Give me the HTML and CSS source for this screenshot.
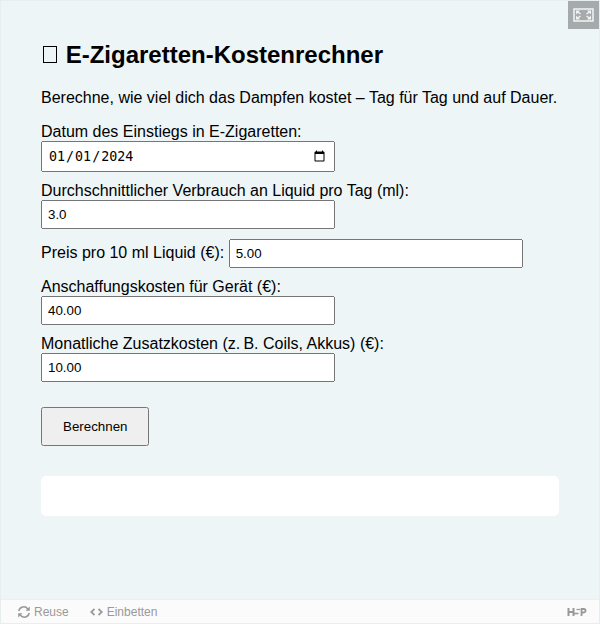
FILE: index.html
```html
<!DOCTYPE html>
<html lang="de">

<head>
    <meta charset="UTF-8">
    <meta name="viewport" content="width=device-width, initial-scale=1.0">
    <title>E-Zigaretten-Kostenrechner</title>
    <link rel="stylesheet" href="styles.css">
</head>

<body>
    <div class="frame">
        <button type="button" class="fullscreen" aria-label="Vollbild">
            <svg width="21" height="14" viewBox="0 0 21 14">
                <rect x="1" y="1" width="19" height="12" fill="none" stroke="#f4f4f4" stroke-width="1.5" />
                <path d="M3 2.500h4L3 6.500zM18 2.500h-4l4 4zM3 11.500h4l-4-4zM18 11.500h-4l4-4z" fill="#f4f4f4" />
                <path d="M4 3.500l3.500 2.500M17 3.500L13.500 6M4 10.500L7.500 8M17 10.500L13.500 8" stroke="#f4f4f4" stroke-width="1.500" />
            </svg>
        </button>

        <main class="calculator">
            <h1><span class="title-icon"></span> E-Zigaretten-Kostenrechner</h1>
            <p class="intro">Berechne, wie viel dich das Dampfen kostet – Tag für Tag und auf Dauer.</p>

            <form id="cost-form">
                <div class="field">
                    <label for="start-date">Datum des Einstiegs in E-Zigaretten:</label>
                    <input type="date" id="start-date" value="2024-01-01">
                </div>
                <div class="field">
                    <label for="liquid">Durchschnittlicher Verbrauch an Liquid pro Tag (ml):</label>
                    <input type="text" inputmode="decimal" id="liquid" value="3.0">
                </div>
                <div class="field">
                    <label for="price">Preis pro 10 ml Liquid (€):</label>
                    <input type="text" inputmode="decimal" id="price" value="5.00">
                </div>
                <div class="field">
                    <label for="device">Anschaffungskosten für Gerät (€):</label>
                    <input type="text" inputmode="decimal" id="device" value="40.00">
                </div>
                <div class="field">
                    <label for="extra">Monatliche Zusatzkosten (z.&#8239;B. Coils, Akkus) (€):</label>
                    <input type="text" inputmode="decimal" id="extra" value="10.00">
                </div>
                <button type="button" class="submit">Berechnen</button>
            </form>

            <div class="result" id="result"></div>
        </main>

        <footer class="actions">
            <button type="button" class="action">
                <svg width="14" height="12" viewBox="0 0 14 12" fill="none" stroke="#999" stroke-width="1.500">
                    <path d="M1.800 5A5 5 0 0 1 10.800 3M12.200 7A5 5 0 0 1 3.200 9" />
                    <path d="M12.800 .5v4.300H8.500zM1.200 11.500V7.200h4.300z" fill="#999" stroke="none" />
                </svg>
                Reuse
            </button>
            <button type="button" class="action">
                <svg width="14" height="12" viewBox="0 0 14 12" fill="none" stroke="#999" stroke-width="1.700">
                    <path d="M4.500 3L1.200 6l3.300 3M8.500 3l3.300 3-3.300 3" />
                </svg>
                Einbetten
            </button>
            <a class="brand" href="#" aria-label="H5P">
                <svg width="20" height="10" viewBox="0 0 20 10" fill="none" stroke="#999" stroke-width="2">
                    <path d="M1.500 1v8M6.500 1v8M1.500 5h5" />
                    <path d="M7 6.500h4.500" stroke-width="1.600" />
                    <path d="M9.500 2.500h3.500" stroke-width="1.200" />
                    <path d="M14.500 9V2h2.300a1.700 1.700 0 0 1 0 3.500h-2.300" stroke-width="1.800" />
                </svg>
            </a>
        </footer>
    </div>
</body>

</html>
```

FILE: styles.css
```css
* {
    box-sizing: border-box;
}

body {
    margin: 0;
    font-family: "Liberation Sans", Arial, sans-serif;
    font-size: 16px;
    color: #000;
}

.frame {
    position: relative;
    display: flex;
    flex-direction: column;
    min-height: 100vh;
    border: 1px solid #e8eef0;
    background-color: #edf5f7;
}

.fullscreen {
    position: absolute;
    top: 0;
    right: 0;
    display: flex;
    align-items: center;
    justify-content: center;
    width: 31px;
    height: 28px;
    padding: 0;
    border: none;
    background-color: #a5aaac;
    cursor: pointer;
}

.calculator {
    flex: 1;
    padding: 40px;
}

h1 {
    margin: 0 0 20px;
    font-size: 24px;
    line-height: 28px;
}

.title-icon {
    display: inline-block;
    width: 14px;
    height: 17px;
    margin: 0 2px;
    border: 1px solid #000;
}

.intro {
    margin: 0 0 16px;
    line-height: 18px;
}

.field {
    margin-bottom: 10px;
    line-height: 18px;
}

.field input {
    width: 294px;
    max-width: 100%;
    padding: 5px;
}

.submit {
    margin-top: 15px;
    padding: 10px 20px;
    cursor: pointer;
}

.result {
    margin-top: 30px;
    padding: 20px;
    border-radius: 5px;
    background-color: #fff;
}

.actions {
    display: flex;
    align-items: center;
    gap: 21px;
    height: 24px;
    padding: 0 12px 0 16px;
    border-top: 1px solid #eee;
    background-color: #fbfbfb;
}

.action {
    display: flex;
    align-items: center;
    gap: 3px;
    padding: 0;
    border: none;
    background: none;
    font-family: inherit;
    font-size: 12px;
    color: #999;
    cursor: pointer;
}

.brand {
    display: flex;
    margin-left: auto;
}
```
